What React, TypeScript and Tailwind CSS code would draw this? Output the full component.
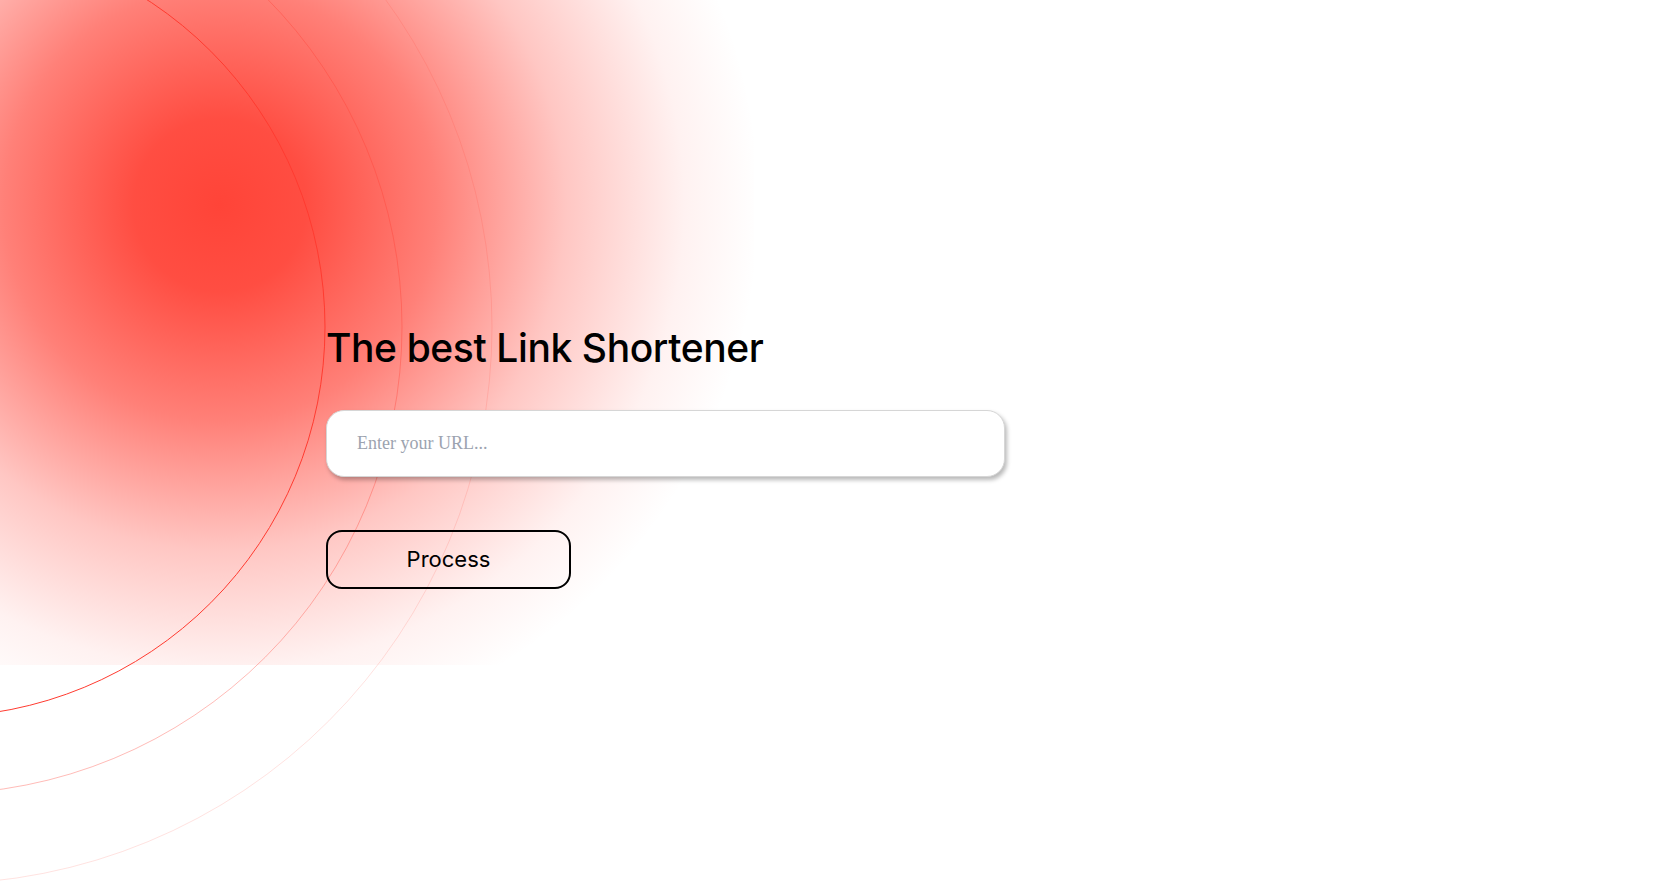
import React, { useState } from "react";

const Rings = () => (
  <svg
    className="pointer-events-none absolute left-0 top-0"
    width="1677"
    height="889"
    viewBox="0 0 1677 889"
    fill="none"
  >
    <circle cx="-65" cy="327" r="390" stroke="#ff3b30" strokeWidth="1" />
    <circle cx="-65" cy="327" r="467" stroke="#ff3b30" strokeOpacity="0.35" strokeWidth="1" />
    <circle cx="-65" cy="327" r="557" stroke="#ff3b30" strokeOpacity="0.15" strokeWidth="1" />
  </svg>
);

export default function App() {
  const [url, setUrl] = useState("");

  return (
    <div className="relative min-h-[889px] w-full overflow-hidden bg-white">
      {/* Background glow */}
      <div className="pointer-events-none absolute left-0 top-0 h-[665px] w-[754px] bg-[radial-gradient(ellipse_540px_540px_at_220px_205px,#ff4438_0%,rgba(255,68,56,0.95)_16%,rgba(255,68,56,0.68)_40%,rgba(255,68,56,0.3)_64%,rgba(255,68,56,0.07)_86%,rgba(255,68,56,0)_100%)]" />
      <Rings />

      {/* Main content */}
      <main className="relative flex flex-col items-start pl-[326px] pt-[322px]">
        <h1 className="font-['Inter',sans-serif] text-[39px] font-medium leading-[52px] tracking-[-0.4px] text-black">
          The best Link Shortener
        </h1>

        <input
          type="text"
          value={url}
          onChange={(e) => setUrl(e.target.value)}
          placeholder="Enter your URL..."
          className="mt-[36px] h-[67px] w-[679px] rounded-[18px] border border-[#d6d6d6] bg-white px-[30px] font-['Liberation_Serif',serif] text-[18px] text-black shadow-[2px_3px_4px_rgba(0,0,0,0.28)] outline-none placeholder:text-[#9ca3af]"
        />

        <button
          type="button"
          className="mt-[53px] h-[59px] w-[245px] rounded-[16px] border-2 border-black bg-transparent font-['Inter',sans-serif] text-[22px] text-black"
        >
          Process
        </button>
      </main>
    </div>
  );
}
